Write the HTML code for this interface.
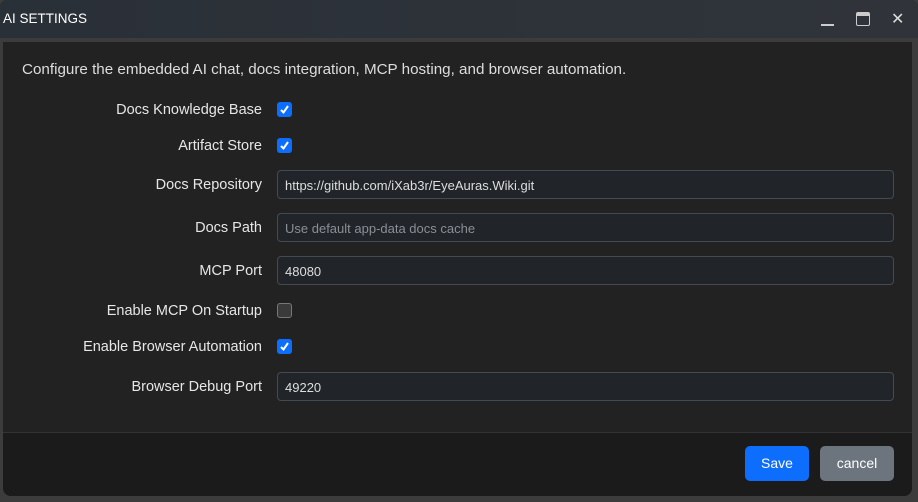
<!DOCTYPE html>
<html><head><style>
*{box-sizing:border-box;margin:0;padding:0}
body{width:918px;height:502px;background:#3c3c3c;font-family:"Liberation Sans",sans-serif;overflow:hidden;position:relative;color:#e6e6e6}
.title{position:absolute;left:0;top:0;width:918px;height:38px;background:linear-gradient(90deg,#2a3038,#30343a);border-radius:6px 6px 0 0}
.title span{position:absolute;left:3px;top:11px;font-size:13.5px;color:#fff}
.panel{position:absolute;left:3px;top:42px;width:909px;height:454px;background:#222;border-radius:0 0 8px 8px;overflow:hidden}
.footer{position:absolute;left:0;top:390px;width:909px;height:64px;background:#1b1b1b;border-top:1px solid #333}
.desc{position:absolute;left:19px;top:19px;font-size:15.2px;color:#ddd}
.lbl{position:absolute;right:650px;font-size:14.5px;color:#e6e6e6;text-align:right;white-space:nowrap;margin-top:1px}
.cb{position:absolute;left:274px;width:15px;height:15px;border-radius:3px;background:#0d6efd}
.cb.off{background:#3a3a3a;border:1px solid #777}
.cb svg{position:absolute;left:1px;top:1px}
.inp{position:absolute;left:274px;width:617px;height:29px;background:#212529;border:1px solid #444a52;border-radius:4px;font-size:13px;color:#ddd;padding:7px 0 0 7px}
.inp.ph{color:#8a8f96}
.btn{position:absolute;top:404px;height:35px;border-radius:5px;color:#fff;font-size:14px;text-align:center;line-height:35px}
</style></head><body>
<div class="title"><span>AI SETTINGS</span>
<div style="position:absolute;left:821px;top:24px;width:13px;height:1.5px;background:#ccc"></div>
<div style="position:absolute;left:856px;top:12px;width:14px;height:14px;border:1.5px solid #ccc;border-top:4px solid #ccc;border-radius:2px"></div>
<div style="position:absolute;left:891px;top:9px;font-size:16px;color:#ddd">✕</div>
</div>
<div class="panel">
<div class="desc">Configure the embedded AI chat, docs integration, MCP hosting, and browser automation.</div>
<div class="lbl" style="top:59px">Docs Knowledge Base</div><div class="cb" style="top:60px"><svg width="13" height="13" viewBox="0 0 13 13"><path d="M3 7l2.5 2.5L10 3" stroke="#fff" stroke-width="2" fill="none"/></svg></div>
<div class="lbl" style="top:95px">Artifact Store</div><div class="cb" style="top:96px"><svg width="13" height="13" viewBox="0 0 13 13"><path d="M3 7l2.5 2.5L10 3" stroke="#fff" stroke-width="2" fill="none"/></svg></div>
<div class="lbl" style="top:134px">Docs Repository</div><div class="inp" style="top:128px">https://github.com/iXab3r/EyeAuras.Wiki.git</div>
<div class="lbl" style="top:177px">Docs Path</div><div class="inp ph" style="top:171px">Use default app-data docs cache</div>
<div class="lbl" style="top:220px">MCP Port</div><div class="inp" style="top:214px">48080</div>
<div class="lbl" style="top:260px">Enable MCP On Startup</div><div class="cb off" style="top:261px"></div>
<div class="lbl" style="top:296px">Enable Browser Automation</div><div class="cb" style="top:297px"><svg width="13" height="13" viewBox="0 0 13 13"><path d="M3 7l2.5 2.5L10 3" stroke="#fff" stroke-width="2" fill="none"/></svg></div>
<div class="lbl" style="top:336px">Browser Debug Port</div><div class="inp" style="top:330px">49220</div>
<div class="footer"></div>
<div class="btn" style="left:742px;width:64px;background:#0d6efd">Save</div>
<div class="btn" style="left:817px;width:74px;background:#6c757d">cancel</div>
</div>
</body></html>
